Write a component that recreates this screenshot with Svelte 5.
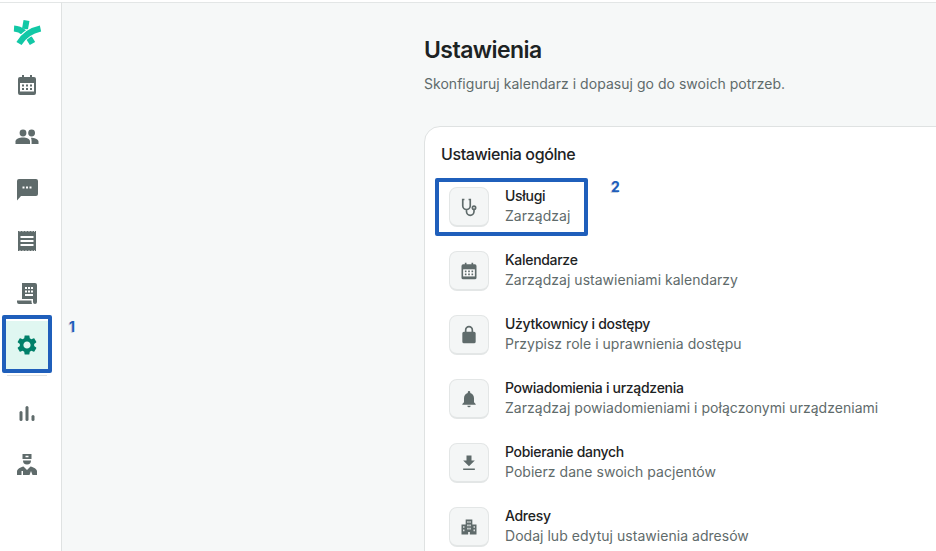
<script>
	const g = '#5f6b6b';
	const icons = {
		calendar: `<path d="M7 2h2v2h6V2h2v2h2a2 2 0 0 1 2 2v14a2 2 0 0 1-2 2H5a2 2 0 0 1-2-2V6a2 2 0 0 1 2-2h2z"/><path fill="#fff" d="M5 10h14v8.500H5z"/><path d="M7 11.500h2v2H7zM11 11.500h2v2h-2zM15 11.500h2v2h-2zM7 15h2v2H7zM11 15h2v2h-2zM15 15h2v2h-2z"/>`,
		people: `<circle cx="8" cy="8" r="3.400"/><circle cx="16.600" cy="8" r="3.400"/><path d="M0.500 19v-2.500C.5 14 4.500 12.600 8 12.600s7 1.400 7 3.900V19z"/><path d="M16 12.700c3 .1 7.500 1.300 7.500 3.800V19H16.600v-2.500c0-1.500-.2-2.700-.6-3.800z"/>`,
		chat: `<path fill-rule="evenodd" d="M4 2h17a2 2 0 0 1 2 2v13a2 2 0 0 1-2 2H6l-4 4.500V4a2 2 0 0 1 2-2zM7.500 9.500v2h2v-2zm3.500 0v2h2v-2zm3.500 0v2h2v-2z"/>`,
		receipt: `<path fill-rule="evenodd" d="M3 2h18v20H3zM5.500 7v2h13V7zM5.500 11v2h13v-2zM5.500 15v2h13v-2z"/><path fill="#fff" d="M4.500 2h1v.8h-1zM7.500 2h1v.8h-1zM10.500 2h1v.8h-1zM13.500 2h1v.8h-1zM16.500 2h1v.8h-1zM19 2h1v.8h-1zM4.500 21.200h1v.8h-1zM7.500 21.200h1v.8h-1zM10.500 21.200h1v.8h-1zM13.500 21.200h1v.8h-1zM16.500 21.200h1v.8h-1zM19 21.200h1v.8h-1z"/>`,
		scroll: `<path fill-rule="evenodd" d="M7 2h13a2 2 0 0 1 2 2v17a2 2 0 0 1-2 2 2 2 0 0 1-2-2v-3H7zM10 6v2h2V6zM13 6v2h2V6zM16 6v2h2V6zM10 9.500v2h2v-2zM13 9.500v2h2v-2zM16 9.500v2h2v-2zM10 13v2h8v-2z"/><path d="M2 19.500h14.500V21c0 .8.2 1.500.6 2H4a2 2 0 0 1-2-2z"/>`,
		gear: `<path d="M19.140 12.940c.04-.3.06-.61.06-.94 0-.32-.02-.64-.07-.94l2.030-1.580c.18-.14.23-.41.12-.61l-1.920-3.320c-.12-.22-.37-.29-.59-.22l-2.390.96c-.5-.38-1.030-.7-1.620-.94l-.36-2.540c-.04-.24-.24-.41-.48-.41h-3.840c-.24 0-.43.17-.47.41l-.36 2.540c-.59.24-1.130.57-1.620.94l-2.390-.96c-.22-.08-.47 0-.59.22L2.740 8.870c-.12.21-.08.47.12.61l2.030 1.580c-.05.3-.09.63-.09.94s.02.64.07.94l-2.030 1.580c-.18.14-.23.41-.12.61l1.920 3.320c.12.22.37.29.59.22l2.390-.96c.5.38 1.030.7 1.620.94l.36 2.540c.05.24.24.41.48.41h3.840c.24 0 .44-.17.47-.41l.36-2.540c.59-.24 1.130-.56 1.620-.94l2.390.96c.22.08.47 0 .59-.22l1.920-3.320c.12-.22.07-.47-.12-.61l-2.010-1.580zM12 15.600c-1.980 0-3.600-1.620-3.600-3.600s1.620-3.600 3.600-3.600 3.600 1.620 3.600 3.600-1.620 3.600-3.600 3.600z"/>`,
		chart: `<rect x="4.500" y="10" width="3" height="10" rx="1.500"/><rect x="10.500" y="5" width="3" height="15" rx="1.500"/><rect x="16.500" y="14" width="3" height="6" rx="1.500"/>`,
		doctor: `<path fill-rule="evenodd" d="M7.500 1h9v5h-9zM10.500 2.800v1.400h3V2.800z"/><path d="M8 7.500h8a4 4 0 0 1-8 0z"/><path d="M2 22v-3.500c0-2.600 3.500-4.400 6.500-5L12 17l3.500-3.500c3 .6 6.500 2.400 6.500 5V22h-4.500l-1.500-4-1.500 4H8v-4H6.500v4z"/>`,
		steth: `<path fill="none" stroke="currentColor" stroke-width="2" d="M6.500 3H4.500v7.500a4.500 4.500 0 0 0 9 0V3h-2M9 15v2.500a4.500 4.500 0 0 0 9 0V15"/><circle cx="18" cy="13" r="2" fill="none" stroke="currentColor" stroke-width="2"/>`,
		lock: `<path fill-rule="evenodd" d="M18 8h-1V6a5 5 0 0 0-10 0v2H6a2 2 0 0 0-2 2v10a2 2 0 0 0 2 2h12a2 2 0 0 0 2-2V10a2 2 0 0 0-2-2zM9 6a3 3 0 0 1 6 0v2H9z"/>`,
		bell: `<path d="M12 22a2 2 0 0 0 2-2h-4a2 2 0 0 0 2 2zm6-6v-5c0-3.100-1.600-5.600-4.500-6.300V4a1.500 1.500 0 0 0-3 0v.7C7.600 5.400 6 7.900 6 11v5l-2 2v1h16v-1z"/>`,
		download: `<path d="M19 9h-4V3H9v6H5l7 7zM5 18.500v2h14v-2z"/>`,
		building: `<path fill-rule="evenodd" d="M8 3h8v6h5v12h-8v-3h-2v3H3V9h5zM10 5v2h1.500V5zM12.500 5v2H14V5zM10 9v2h1.500V9zM12.500 9v2H14V9zM10 13v2h1.500v-2zM12.500 13v2H14v-2zM5 11v2h1.500v-2zM5 15v2h1.500v-2zM17.500 11v2H19v-2zM17.500 15v2H19v-2z"/>`
	};

	const navTop = ['calendar', 'people', 'chat', 'receipt', 'scroll'];
	const navBottom = ['chart', 'doctor'];

	const rows = [
		{ icon: 'steth', title: 'Usługi', sub: 'Zarządzaj' },
		{ icon: 'calendar', title: 'Kalendarze', sub: 'Zarządzaj ustawieniami kalendarzy' },
		{ icon: 'lock', title: 'Użytkownicy i dostępy', sub: 'Przypisz role i uprawnienia dostępu' },
		{ icon: 'bell', title: 'Powiadomienia i urządzenia', sub: 'Zarządzaj powiadomieniami i połączonymi urządzeniami' },
		{ icon: 'download', title: 'Pobieranie danych', sub: 'Pobierz dane swoich pacjentów' },
		{ icon: 'building', title: 'Adresy', sub: 'Dodaj lub edytuj ustawienia adresów' }
	];
</script>

<div class="page">
	<aside class="side">
		<div class="logo">
			<svg width="30" height="28" viewBox="0 0 30 28" fill="none" stroke-width="6">
				<path stroke="#12c8a6" d="M14.500 1.500 13 10" />
				<path stroke="#12c8a6" d="M2 9.500C10 10 16 16 20.500 24.500" />
				<path stroke="#fff" stroke-width="8" d="M28.500 10C20 11.500 13 16 8 22" />
				<path stroke="#12c8a6" d="M28.500 9.500C19 11.500 12 16 7 24.500" />
			</svg>
		</div>
		{#each navTop as n}
			<div class="nav">
				<svg width="24" height="24" viewBox="0 0 24 24" fill={g}>{@html icons[n]}</svg>
			</div>
		{/each}
		<div class="nav active">
			<svg width="24" height="24" viewBox="0 0 24 24" fill="#00806a">{@html icons.gear}</svg>
		</div>
		<div class="sep"></div>
		{#each navBottom as n}
			<div class="nav">
				<svg width="24" height="24" viewBox="0 0 24 24" fill={g}>{@html icons[n]}</svg>
			</div>
		{/each}
	</aside>

	<main class="main">
		<div class="content">
			<h1>Ustawienia</h1>
			<p class="lead">Skonfiguruj kalendarz i dopasuj go do swoich potrzeb.</p>

			<section class="card">
				<h2>Ustawienia ogólne</h2>
				<ul>
					{#each rows as r}
						<li>
							<span class="tile">
								<svg width="20" height="20" viewBox="0 0 24 24" fill={g} color={g}>{@html icons[r.icon]}</svg>
							</span>
							<span class="txt">
								<strong>{r.title}</strong>
								<span>{r.sub}</span>
							</span>
						</li>
					{/each}
				</ul>
			</section>
		</div>
	</main>

	<!-- annotation marks drawn over the shot -->
	<div class="mark mark-a"></div>
	<div class="mark mark-b"></div>
	<span class="num num-a">1</span>
	<span class="num num-b">2</span>
</div>

<style>
	:global(body) {
		background: #fff;
	}

	.page {
		position: relative;
		height: 551px;
		width: 936px;
		overflow: hidden;
		display: flex;
		box-sizing: border-box;
		padding-top: 2px;
		font-family: Inter, "Liberation Sans", sans-serif;
	}

	.side {
		width: 62px;
		flex: none;
		box-sizing: border-box;
		border-top: 1px solid #e3e6e6;
		border-right: 1px solid #dfe2e2;
		background: #fff;
		display: flex;
		flex-direction: column;
		align-items: flex-start;
		padding: 4px 0 0 6px;
	}

	.logo,
	.nav {
		width: 43px;
		height: 52px;
		box-sizing: border-box;
		padding-right: 2px;
		display: flex;
		align-items: center;
		justify-content: center;
	}

	.active {
		background: #e0f7f1;
		height: 48px;
		margin-top: 2px;
		margin-bottom: 2px;
	}

	.sep {
		width: 40px;
		height: 1px;
		background: #dfe2e2;
		margin: 4px 0 11px 1px;
	}

	.main {
		flex: 1;
		background: #f6f8f8;
		border-top: 1px solid #e3e6e6;
		padding-left: 362px;
		overflow: hidden;
	}

	.content {
		width: 700px;
	}

	h1 {
		margin: 31px 0 0;
		font-size: 23px;
		line-height: 32px;
		font-weight: 600;
		letter-spacing: -0.55px;
		color: #1d2324;
	}

	.lead {
		margin: 8px 0 0;
		font-size: 14px;
		line-height: 20px;
		letter-spacing: 0.03px;
		color: #5f6b6b;
	}

	.card {
		margin-top: 32px;
		background: #fff;
		border: 1px solid #dfe2e2;
		border-radius: 16px;
		padding: 17px 16px 0;
		height: 600px;
	}

	h2 {
		margin: 0;
		font-size: 16px;
		line-height: 20px;
		font-weight: 500;
		letter-spacing: -0.4px;
		color: #1d2324;
	}

	ul {
		list-style: none;
		margin: 23px 0 0;
		padding: 0 0 0 8px;
		display: flex;
		flex-direction: column;
		gap: 24px;
	}

	li {
		display: flex;
		align-items: center;
		gap: 16px;
	}

	.tile {
		width: 40px;
		height: 40px;
		box-sizing: border-box;
		background: #f4f6f6;
		border: 1px solid #e3e6e6;
		border-bottom-width: 2px;
		border-radius: 8px;
		display: flex;
		align-items: center;
		justify-content: center;
	}

	.txt {
		display: flex;
		flex-direction: column;
		margin-top: -2px;
		font-size: 14px;
		line-height: 20px;
		letter-spacing: 0.03px;
		color: #5f6b6b;
	}

	.txt strong {
		font-size: 14px;
		font-weight: 500;
		letter-spacing: -0.3px;
		color: #1d2324;
	}

	.mark {
		position: absolute;
		box-sizing: border-box;
		border: 4px solid #1f5fbb;
		border-radius: 2px;
	}

	.mark-a {
		left: 2px;
		top: 315px;
		width: 50px;
		height: 58px;
	}

	.mark-b {
		left: 435px;
		top: 178px;
		width: 153px;
		height: 58px;
	}

	.num {
		position: absolute;
		font-size: 14px;
		line-height: 14px;
		font-weight: 700;
		color: #1f5fbb;
		text-shadow: -1px 1px 0 #c9d3dc;
	}

	.num-a {
		left: 69px;
		top: 320px;
	}

	.num-b {
		left: 611px;
		top: 180px;
	}
</style>
